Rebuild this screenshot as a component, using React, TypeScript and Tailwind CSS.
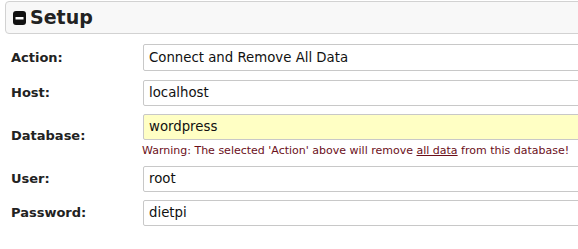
import React from "react";

const font = { fontFamily: '"DejaVu Sans", Verdana, sans-serif' };

function Row({ label, children, labelClass = "" }: { label: string; children: React.ReactNode; labelClass?: string }) {
  return (
    <div className="flex items-center">
      <div className={"w-[132px] shrink-0 text-[13px] font-bold text-[#222] " + labelClass}>{label}</div>
      <div className="flex-1 min-w-0">{children}</div>
    </div>
  );
}

function Input({ value, yellow = false, h = "h-[26px]" }: { value: string; yellow?: boolean; h?: string }) {
  return (
    <div
      className={
        "w-[460px] border border-[#c8c8c8] rounded-[2px] flex items-center pl-[5px] text-[13.3px] text-[#111] " +
        h +
        (yellow ? " bg-[#ffffc4]" : " bg-white")
      }
    >
      {value}
    </div>
  );
}

export default function App() {
  return (
    <div className="w-[578px] h-[249px] overflow-hidden bg-white relative" style={font}>
      <div className="ml-[5px] mt-[1px] h-[33px] w-[600px] border border-[#d2d2d2] rounded-[4px] bg-[#f8f8f8] flex items-center pl-[7px]">
        <svg width="13" height="14" viewBox="0 0 13 14" className="mr-[4px] mt-[1px]">
          <rect x="0" y="0" width="13" height="14" rx="3" fill="#111" />
          <rect x="2.5" y="6" width="8" height="2.5" fill="#fff" />
        </svg>
        <span className="text-[19px] font-bold text-[#222] leading-none">Setup</span>
      </div>
      <div className="pl-[11px] flex flex-col">
        <div className="mt-[10px]">
          <Row label="Action:">
            <Input value="Connect and Remove All Data" h="h-[27px]" />
          </Row>
        </div>
        <div className="mt-[9px]">
          <Row label="Host:">
            <Input value="localhost" />
          </Row>
        </div>
        <div className="mt-[8px]">
          <Row label="Database:">
            <div>
              <Input value="wordpress" yellow />
              <div className="text-[11px] text-[#6b0f1a] mt-[3px] -ml-[1px] leading-[15px]">
                Warning: The selected 'Action' above will remove <span className="underline">all data</span> from this database!
              </div>
            </div>
          </Row>
        </div>
        <div className="mt-[8px]">
          <Row label="User:">
            <Input value="root" />
          </Row>
        </div>
        <div className="mt-[8px]">
          <Row label="Password:">
            <Input value="dietpi" />
          </Row>
        </div>
      </div>
    </div>
  );
}
